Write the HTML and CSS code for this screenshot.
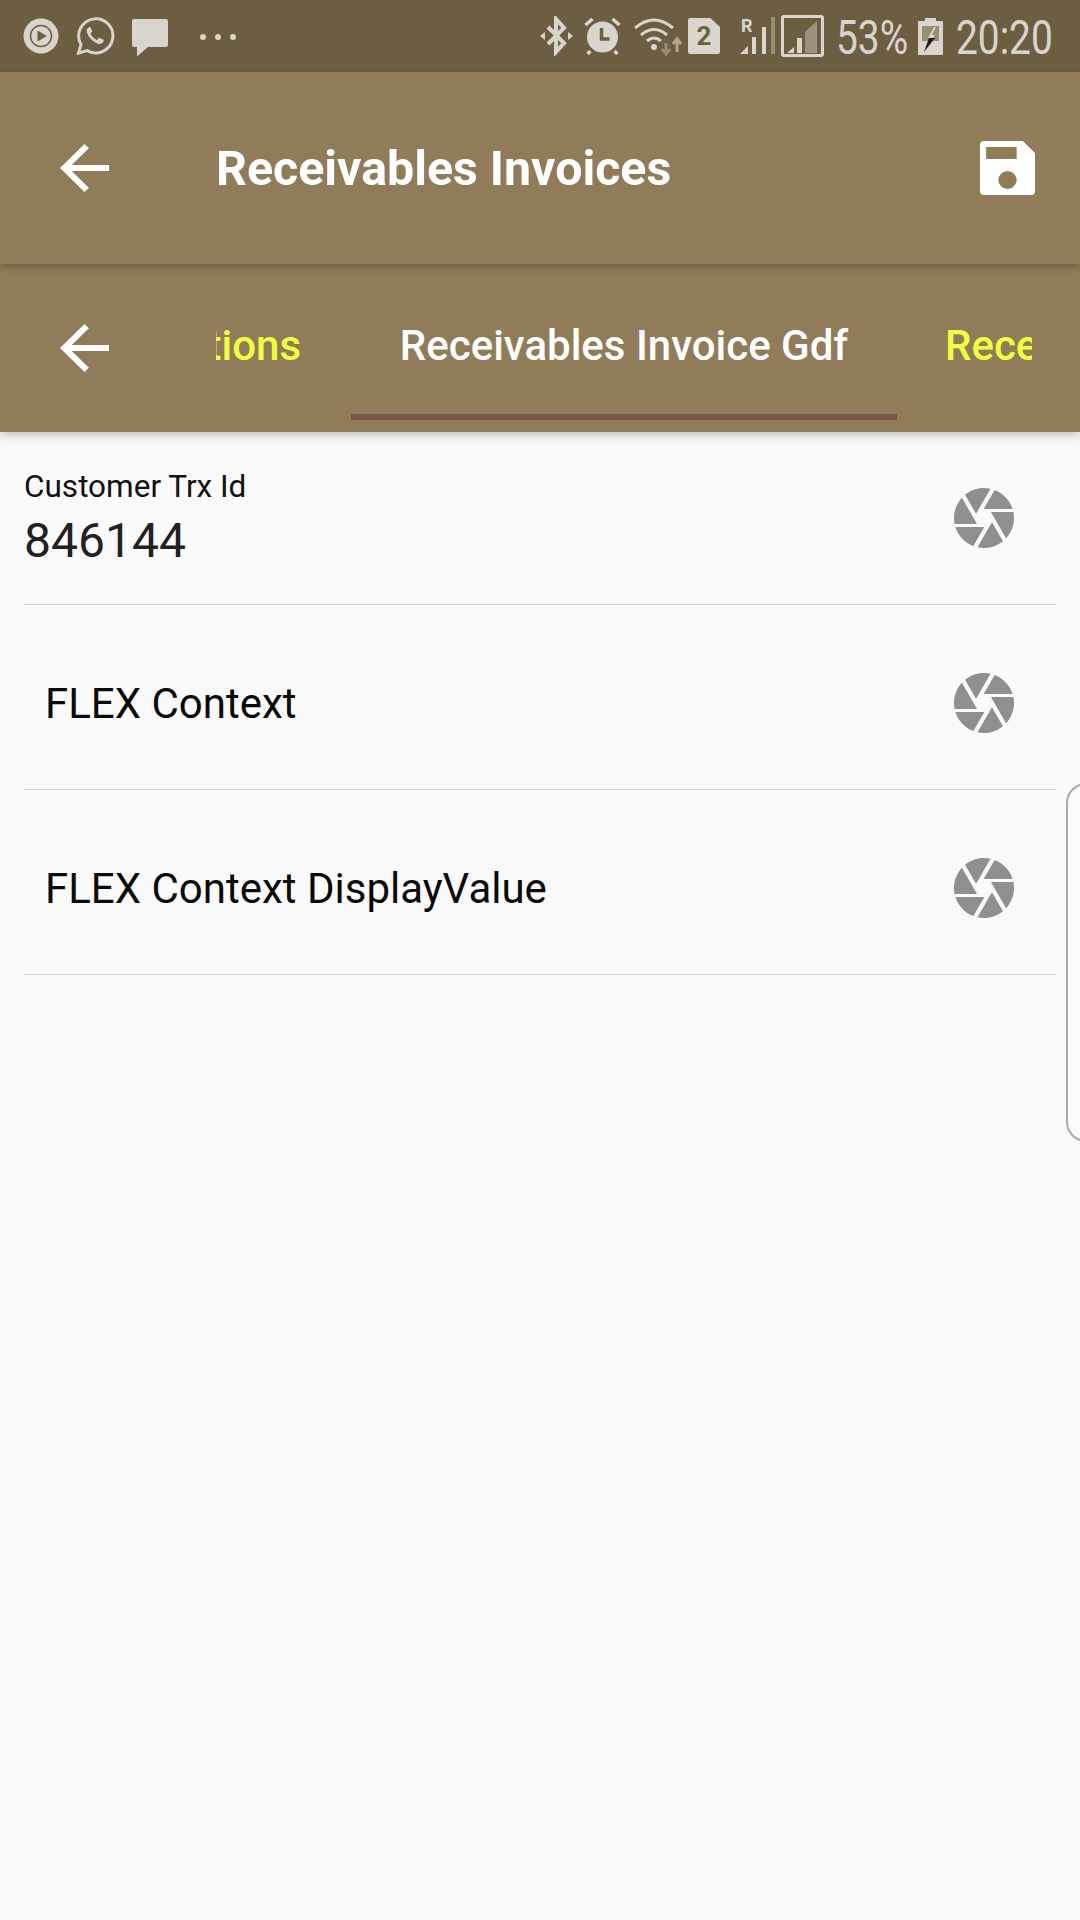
FILE: index.html
```html
<!DOCTYPE html>
<html lang="en">
<head>
    <meta charset="UTF-8">
    <meta name="viewport" content="width=device-width, initial-scale=1.0">
    <title>Receivables Invoices</title>
    <link rel="stylesheet" href="styles.css">
</head>
<body>

    <svg class="defs" width="0" height="0">
        <symbol id="aperture" viewBox="0 0 24 24">
            <path d="M9.4 10.5l4.77-8.26C13.47 2.09 12.75 2 12 2c-2.4 0-4.6.85-6.32 2.25l3.66 6.35.06-.1zM21.54 9c-.92-2.92-3.15-5.26-6-6.34L11.88 9h9.66zm.26 1h-7.49l.29.5 4.76 8.25C21 16.97 22 14.61 22 12c0-.69-.07-1.35-.2-2zM8.54 12l-3.9-6.75C3.01 7.03 2 9.39 2 12c0 .69.07 1.35.2 2h7.49l-1.15-2zm-6.08 3c.92 2.92 3.15 5.26 6 6.34L12.12 15H2.46zm11.27 0l-3.9 6.76c.7.15 1.42.24 2.17.24 2.4 0 4.6-.85 6.32-2.25l-3.66-6.35-.93 1.6z"/>
        </symbol>
        <symbol id="back" viewBox="8 8 32 32" preserveAspectRatio="none">
            <path d="M40 22H15.660l11.170-11.170L24 8 8 24l16 16 2.830-2.830L15.660 26H40z"/>
        </symbol>
    </svg>

    <!-- Status bar -->
    <div class="status-bar">
        <div class="status-left">
            <svg class="st-icon" width="36" height="36" viewBox="0 0 36 36">
                <circle cx="18" cy="18" r="17.500" fill="#d9d5cd"/>
                <circle cx="18" cy="18" r="10.500" fill="none" stroke="#6c5f41" stroke-width="1.500"/>
                <path d="M14.500 12.500L24 18l-9.500 5.500z" fill="#6c5f41"/>
            </svg>
            <svg class="st-icon" width="39" height="40" viewBox="0 0 40 40">
                <path d="M2.500 37.500l2.700-8.800A17.500 17.500 0 1 1 11.500 35z" fill="none" stroke="#d9d5cd" stroke-width="3"/>
                <path d="M14 10.500c-2 .6-3.500 2.800-2.800 5.700 1.200 4.800 6 10 11.500 11.700 2.600.7 5-.6 5.800-2.800.2-.7-.1-1.100-.6-1.400l-3.400-1.700c-.6-.2-1-.1-1.400.4l-1.300 1.600c-3-1-5.600-3.400-7-6.600l1.400-1.400c.4-.4.400-.9.200-1.400l-1.400-3.300c-.2-.5-.6-.8-1-.7z" fill="#d9d5cd"/>
            </svg>
            <svg class="st-icon chat" width="36" height="38" viewBox="0 0 36 38">
                <path d="M2 0h32a2 2 0 0 1 2 2v24a2 2 0 0 1-2 2H16L5 37.500V28H2a2 2 0 0 1-2-2V2a2 2 0 0 1 2-2z" fill="#d9d5cd"/>
            </svg>
            <div class="dots"><span></span><span></span><span></span></div>
        </div>
        <div class="status-right">
            <svg class="st-icon" width="33" height="40" viewBox="0 0 33 40">
                <path d="M8 11l16 16-8 9V3l8 9L8 28" fill="none" stroke="#d9d5cd" stroke-width="4"/>
                <path d="M0 20l5-4v8zM33 20l-5-4v8z" fill="#d9d5cd"/>
            </svg>
            <svg class="st-icon alarm" width="37" height="38" viewBox="0 0 36 38">
                <path d="M1 8l7-6M35 8l-7-6M6 34l-3 3M30 34l3 3" stroke="#d9d5cd" stroke-width="3.500" fill="none"/>
                <circle cx="18" cy="20" r="15.500" fill="#d9d5cd"/>
                <path d="M17 11v11h8" fill="none" stroke="#6c5f41" stroke-width="3.500"/>
            </svg>
            <svg class="st-icon wifi" width="49" height="40" viewBox="0 0 49 40">
                <path d="M1 12Q20-4 39 12M7 19Q20 8 33 19M13 25Q20 19 27 25" fill="none" stroke="#d9d5cd" stroke-width="3"/>
                <circle cx="20" cy="31" r="3" fill="#d9d5cd"/>
                <path d="M32 27v11M28 33l4 5 4-5" fill="none" stroke="#978c74" stroke-width="3"/>
                <path d="M43 36V24M39 28l4-5 4 5" fill="none" stroke="#b0a794" stroke-width="3"/>
            </svg>
            <div class="sim">2</div>
            <div class="signal-r">
                <span class="roam">R</span>
                <svg width="35" height="38" viewBox="0 0 35 38">
                    <path d="M0 37l8-8v8zM12 20h4v17h-4zM22 10h4v27h-4z" fill="#d9d5cd"/>
                    <path d="M31 0h4v37h-4z" fill="#978c74"/>
                </svg>
            </div>
            <div class="signal-box">
                <svg width="36" height="36" viewBox="0 0 36 36">
                    <path d="M3 35l7-6v6zM13 20h5v15h-5z" fill="#d9d5cd"/>
                    <path d="M21 14L33 3v32H21z" fill="#9b927d"/>
                </svg>
            </div>
            <span class="st-text pct">53%</span>
            <svg class="st-icon batt" width="25" height="37" viewBox="0 0 25 37">
                <path d="M7 0h11v3h6a1 1 0 0 1 1 1v32a1 1 0 0 1-1 1H1a1 1 0 0 1-1-1V4a1 1 0 0 1 1-1h6z" fill="#d9d5cd"/>
                <path d="M4 8h17v15H4z" fill="#978c74"/>
                <path d="M16 9l-6 11h5l2-3h-3l4-8z" fill="#d9d5cd"/>
                <path d="M11 20h6L6 34l5-14z" fill="#1e1c16"/>
            </svg>
            <span class="st-text time">20:20</span>
        </div>
    </div>

    <!-- Top app bar -->
    <header class="app-bar">
        <svg class="back-icon"><use href="#back"/></svg>
        <h1 class="app-title">Receivables Invoices</h1>
        <svg class="save-icon" viewBox="3 3 18 18" preserveAspectRatio="none">
            <path d="M17 3H4.300A1.300 1.300 0 0 0 3 4.300v15.400A1.300 1.300 0 0 0 4.300 21h15.400a1.300 1.300 0 0 0 1.300-1.300V7l-4-4zm-5 16a3 3 0 1 1 0-6 3 3 0 0 1 0 6zm3-10H5V5h10v4z"/>
        </svg>
    </header>

    <!-- Tabs -->
    <nav class="tab-bar">
        <svg class="back-icon"><use href="#back"/></svg>
        <div class="tabs">
            <div class="tab tab-prev"><span>tions</span></div>
            <div class="tab tab-active">Receivables Invoice Gdf</div>
            <div class="tab tab-next">Rece</div>
        </div>
    </nav>

    <!-- Form rows -->
    <main class="rows">
        <div class="row row-filled">
            <div class="field">
                <div class="field-label">Customer Trx Id</div>
                <div class="field-value">846144</div>
            </div>
            <svg class="aperture"><use href="#aperture"/></svg>
        </div>
        <div class="row">
            <div class="field-name">FLEX Context</div>
            <svg class="aperture"><use href="#aperture"/></svg>
        </div>
        <div class="row">
            <div class="field-name">FLEX Context DisplayValue</div>
            <svg class="aperture"><use href="#aperture"/></svg>
        </div>
    </main>

    <!-- Edge panel handle -->
    <div class="edge-handle"></div>

</body>
</html>
```

FILE: styles.css
```css
* {
    box-sizing: border-box;
}

body {
    width: 1080px;
    height: 1920px;
    margin: 0;
    overflow: hidden;
    position: relative;
    background-color: #fafafa;
    font-family: Roboto, sans-serif;
    color: #212121;
}

.defs {
    position: absolute;
}

.status-bar {
    height: 72px;
    background-color: #6c5f41;
    display: flex;
    justify-content: space-between;
    align-items: center;
    padding: 0 27px 0 23px;
}

.status-left,
.status-right {
    display: flex;
    align-items: center;
}

.st-icon {
    display: block;
    flex: none;
}

.status-left {
    gap: 17px;
}

.chat {
    margin-top: 3px;
}

.dots {
    display: flex;
    gap: 9px;
    margin: 2px 0 0 15px;
}

.dots span {
    width: 6px;
    height: 6px;
    border-radius: 50%;
    background-color: #d9d5cd;
}

.alarm {
    margin-left: 11px;
}

.wifi {
    margin-left: 13px;
}

.sim {
    width: 32px;
    height: 36px;
    margin-left: 5px;
    background-color: #d9d5cd;
    color: #6c5f41;
    font-size: 26px;
    font-weight: 700;
    line-height: 36px;
    text-align: center;
    border-radius: 2px;
    clip-path: polygon(0 0, 70% 0, 100% 25%, 100% 100%, 0 100%);
}

.signal-r {
    position: relative;
    margin-left: 20px;
}

.signal-r svg {
    display: block;
}

.roam {
    position: absolute;
    left: 1px;
    top: 0;
    font-size: 18px;
    line-height: 18px;
    font-weight: 700;
    color: #d9d5cd;
}

.signal-box {
    width: 43px;
    height: 42px;
    margin-left: 6px;
    border: 3px solid #d9d5cd;
    border-radius: 3px;
}

.signal-box svg {
    display: block;
}

/* no condensed Roboto here, so squeeze the regular one */
.st-text {
    display: block;
    flex: none;
    margin-top: 3px;
    color: #d9d5cd;
    font-size: 48px;
    line-height: 56px;
    white-space: nowrap;
    transform-origin: left center;
    transform: scaleX(0.81);
}

.pct {
    width: 71px;
    margin-left: 12px;
}

.batt {
    margin-left: 11px;
}

.time {
    width: 97px;
    margin-left: 13px;
}

.app-bar {
    height: 192px;
    background-color: #907c58;
    display: flex;
    align-items: center;
    padding: 0 45px 0 60px;
    position: relative;
    z-index: 2;
    box-shadow: 0 3px 8px rgba(0, 0, 0, 0.25);
}

.back-icon {
    display: block;
    flex: none;
    width: 49px;
    height: 48px;
    fill: #fff;
}

.app-title {
    flex: 1;
    margin: 0 0 0 107px;
    font-size: 48.300px;
    font-weight: 700;
    color: #fff;
}

.save-icon {
    width: 55px;
    height: 54px;
    fill: #fff;
    flex: none;
}

.tab-bar {
    height: 168px;
    background-color: #907c58;
    display: flex;
    align-items: center;
    padding-left: 60px;
    position: relative;
    z-index: 1;
    box-shadow: 0 3px 10px rgba(0, 0, 0, 0.25);
}

.tabs {
    display: flex;
    width: 816px;
    margin-left: 107px;
    height: 168px;
    overflow: hidden;
    flex: none;
}

.tab {
    flex: none;
    height: 156px;
    padding-top: 57px;
    font-size: 42px;
    font-weight: 500;
    white-space: nowrap;
    color: #eeff41;
}

.tab-prev {
    width: 135px;
    padding-right: 50px;
    display: flex;
    justify-content: flex-end;
    overflow: hidden;
}

.tab-active {
    width: 546px;
    text-align: center;
    color: #fff;
    border-bottom: 6px solid #795548;
}

.tab-next {
    padding-left: 48px;
}

.rows {
    padding: 0 24px;
}

.row {
    height: 185px;
    padding: 12px 36px 0 0;
    border-bottom: 1px solid #cdd2d6;
    display: flex;
    justify-content: space-between;
    align-items: center;
}

.row-filled {
    height: 173px;
    padding-top: 0;
}

.field {
    padding-top: 2px;
}

.field-label {
    font-size: 31.500px;
    line-height: 44px;
    color: #111;
}

.field-value {
    font-size: 48px;
    line-height: 64px;
    color: #212121;
}

.field-name {
    margin-left: 21px;
    font-size: 42px;
    color: #0a0a0a;
}

.aperture {
    width: 72px;
    height: 72px;
    fill: #8f8f8f;
    flex: none;
}

.edge-handle {
    position: absolute;
    left: 1066px;
    top: 783px;
    width: 40px;
    height: 359px;
    border: 2px solid #aaa;
    border-radius: 20px;
    background-color: #fbfbfb;
}
```
